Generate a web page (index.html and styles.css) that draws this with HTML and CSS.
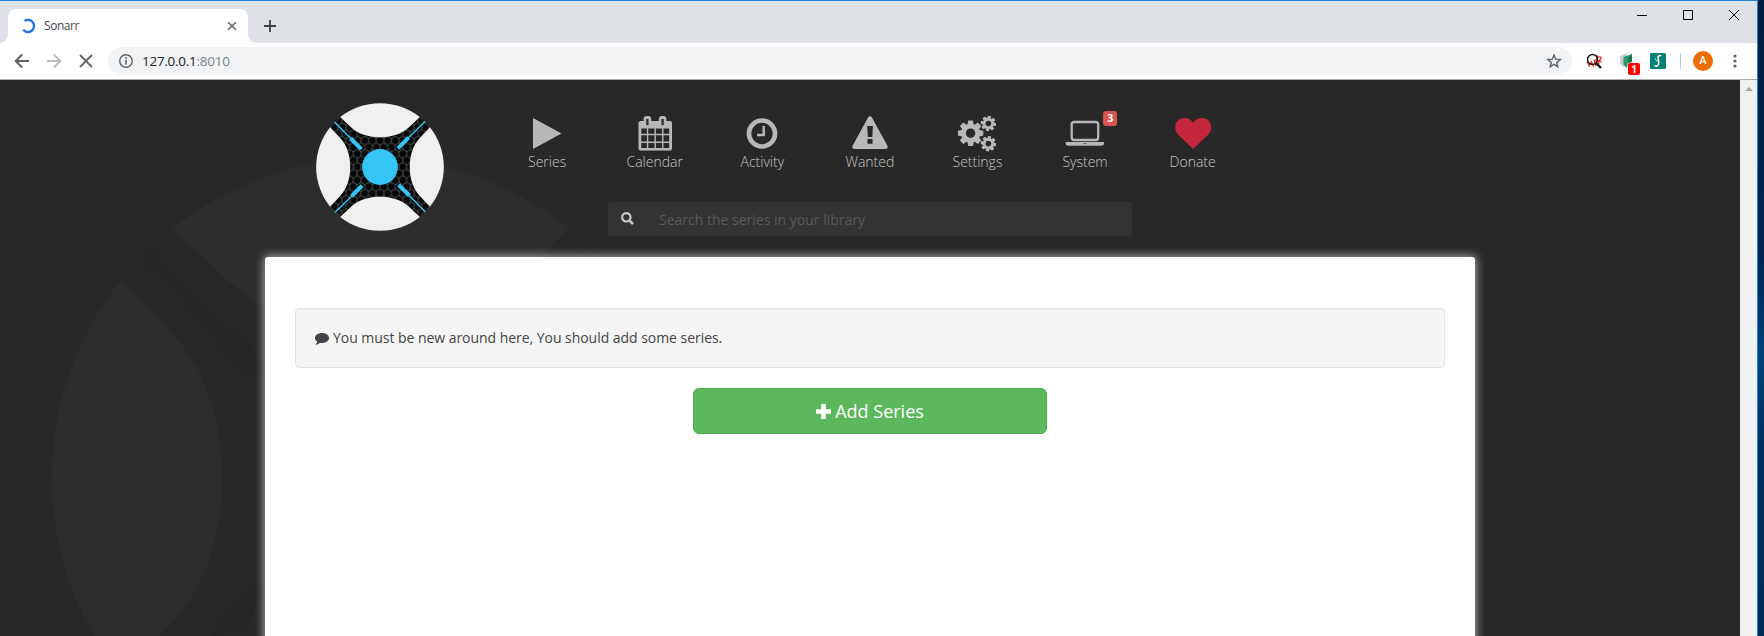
FILE: index.html
```
<!DOCTYPE html>
<html lang="en">
<head>
<meta charset="utf-8">
<title>Sonarr</title>
<link rel="stylesheet" href="styles.css">
</head>
<body>
<svg width="0" height="0" class="defs">
  <defs>
    <pattern id="hex" width="7.6" height="13.2" patternUnits="userSpaceOnUse">
      <path d="M3.8 0v2.2l3.8 2.2v4.4l-3.8 2.2v2.2M3.8 2.2L0 4.4v4.4l3.8 2.2" fill="none" stroke="#5c5e60" stroke-width=".8"/>
    </pattern>
    <g id="petals">
      <path id="petal" d="M-39.8-49.9L-29-39.8C-21-32.300-10-29.800 0-29.800S21-32.300 29-39.800L39.800-49.900A63.800 63.800 0 0 0-39.800-49.900z"/>
      <use href="#petal" transform="rotate(90)"/>
      <use href="#petal" transform="rotate(180)"/>
      <use href="#petal" transform="rotate(270)"/>
    </g>
    <g id="spoke">
      <path d="M-18.6-17.9L-29.4-28.5" stroke-width="4"/>
      <path d="M-29-28.2L-45.4-45" stroke-width="1.4"/>
    </g>
    <g id="spokes">
      <use href="#spoke"/>
      <use href="#spoke" transform="rotate(90)"/>
      <use href="#spoke" transform="rotate(180)"/>
      <use href="#spoke" transform="rotate(270)"/>
    </g>
    <g id="gear">
      <circle r="7.1" fill="none" stroke="currentColor" stroke-width="4.7"/>
      <g id="teeth">
        <path id="tooth" d="M-3.2-8.5L-2.4-12.7H2.4L3.2-8.5zM-3.2 8.5L-2.4 12.7H2.4L3.2 8.5z"/>
        <use href="#tooth" transform="rotate(45)"/>
        <use href="#tooth" transform="rotate(90)"/>
        <use href="#tooth" transform="rotate(135)"/>
      </g>
    </g>
  </defs>
</svg>
<div class="screen">
  <div class="window">
    <header class="tabstrip">
      <div class="tab">
        <svg class="spinner" width="16" height="16" viewBox="0 0 16 16"><path d="M4.500 2.900A6.100 6.100 0 1 1 3.200 11.800" fill="none" stroke="#1a73e8" stroke-width="2.300"/></svg>
        <span class="tab-title">Sonarr</span>
        <svg width="10" height="10" viewBox="0 0 10 10"><path d="M1.200 1.200l7.600 7.600M8.800 1.200L1.200 8.800" stroke="#5f6368" stroke-width="1.600"/></svg>
      </div>
      <svg class="newtab" width="12" height="12" viewBox="0 0 12 12"><path d="M6 0v12M0 6h12" stroke="#3c4043" stroke-width="1.800"/></svg>
      <div class="controls">
        <svg width="10" height="11" viewBox="0 0 10 11"><path d="M0 6.500h10" stroke="#000"/></svg>
        <svg width="10" height="11" viewBox="0 0 10 11"><path d="M.5 1.500h9v9h-9z" fill="none" stroke="#000"/></svg>
        <svg width="10" height="11" viewBox="0 0 10 11"><path d="M0 1l10 10M10 1L0 11" stroke="#000"/></svg>
      </div>
    </header>
    <div class="toolbar">
      <svg class="tool" width="16" height="16" viewBox="0 0 16 16"><path d="M15 8H2M8.200 1.500L1.700 8l6.500 6.500" fill="none" stroke="#5f6368" stroke-width="2"/></svg>
      <svg class="tool" width="16" height="16" viewBox="0 0 16 16"><path d="M1 8h13M7.800 1.500L14.300 8l-6.500 6.500" fill="none" stroke="#babcbe" stroke-width="2"/></svg>
      <svg class="tool" width="16" height="16" viewBox="0 0 16 16"><path d="M2 2l12 12M14 2L2 14" stroke="#5f6368" stroke-width="1.800"/></svg>
      <div class="omnibox">
        <svg width="16" height="16" viewBox="0 0 16 16"><circle cx="8" cy="8" r="6.300" fill="none" stroke="#5f6368" stroke-width="1.400"/><path d="M8 7v4.600M8 4.200v1.700" stroke="#5f6368" stroke-width="1.600"/></svg>
        <span class="url">127.0.0.1<span class="port">:8010</span></span>
        <svg class="star" width="16" height="16" viewBox="0 0 16 16"><path d="M8 2l1.700 4.200 4.500.3-3.500 2.900 1.100 4.400L8 11.400l-3.800 2.400 1.100-4.400-3.500-2.900 4.500-.3z" fill="none" stroke="#5f6368" stroke-width="1.400"/></svg>
      </div>
      <svg class="ext1" width="17" height="17" viewBox="0 0 17 17"><path d="M1 9l3 5M3 12l3-3M5 8l3 6M8 7l2 6M8 8c3-3 4 0 1 2M11 5l2 6M11 5c5-3 5 1 1.500 3l3.500 1M10 2l2 2" fill="none" stroke="#e8302e" stroke-width="1.300"/><circle cx="6.500" cy="6.500" r="5" fill="none" stroke="#111" stroke-width="1.400"/><path d="M10 10l5 5" stroke="#111" stroke-width="2.400"/></svg>
      <div class="ext2">
        <svg width="14" height="18" viewBox="0 0 14 18"><path d="M0 4l7-3v3L4 6v9l-4-3z" fill="#c9cdcf"/><path d="M3.500 5L12 2v8l-4 1-1 5-3.500-3z" fill="#2f9968"/><path d="M8 6l4-4v8l-4 1z" fill="#18744d"/></svg>
        <span class="ext-badge">1</span>
      </div>
      <svg class="ext3" width="16" height="16" viewBox="0 0 16 16"><rect width="16" height="16" rx="1.500" fill="#078279"/><path d="M11.300 2.800c-2-1-3.700.2-3.300 2.400.4 2.300 1.500 4.300.2 6.600-.8 1.300-2.400 1.500-3.700.8" fill="none" stroke="#fff" stroke-width="1.500"/><path d="M5.500 5.500c-.5 1.500 1 2.300 2.500 2.700" fill="none" stroke="#cfe8e6" stroke-width="1"/></svg>
      <span class="sep"></span>
      <span class="avatar">A</span>
      <svg width="4" height="14" viewBox="0 0 4 14"><g fill="#5f6368"><circle cx="2" cy="2" r="1.600"/><circle cx="2" cy="7" r="1.600"/><circle cx="2" cy="12" r="1.600"/></g></svg>
    </div>
    <div class="viewport">
      <main class="page">
        <svg class="watermark" width="650" height="650" viewBox="-65 -65 130 130"><circle r="62" fill="#282828"/><use href="#petals" fill="#2d2d2d"/><use href="#spokes" stroke="#262626"/></svg>
        <div class="top">
          <svg class="logo" width="130" height="130" viewBox="-65 -65 130 130"><circle r="62.500" fill="#060809"/><circle r="62" fill="url(#hex)"/><use href="#petals" fill="#f0f0f0"/><circle r="17.900" fill="#35c5f4"/><use href="#spokes" stroke="#35c5f4"/></svg>
          <div class="menu">
            <nav class="nav">
              <a class="item"><svg width="44" height="39" viewBox="0 0 44 39"><path d="M8 5l28.500 15.500L8 36z"/></svg><span>Series</span></a>
              <a class="item"><svg width="44" height="39" viewBox="0 0 44 39"><path fill-rule="evenodd" d="M7.500 8H37a2 2 0 0 1 2 2v25.500a2 2 0 0 1-2 2H7.500a2 2 0 0 1-2-2V10a2 2 0 0 1 2-2zM8.300 15.500v5.300h5.600v-5.300zm7 0v5.300h6.200v-5.300zm7.600 0v5.300h6.200v-5.300zm7.600 0v5.300h5.700v-5.300zM8.300 22.200v6.300h5.600v-6.300zm7 0v6.300h6.200v-6.300zm7.600 0v6.300h6.200v-6.300zm7.600 0v6.300h5.700v-6.300zM8.300 29.900V35h5.600v-5.100zm7 0V35h6.200v-5.100zm7.600 0V35h6.200v-5.100zm7.600 0V35h5.700v-5.100z"/><rect x="11.600" y="4.100" width="5.600" height="8" rx="2" stroke="#b8b8b8" stroke-width="2"/><rect x="26.800" y="4.100" width="5.600" height="8" rx="2" stroke="#b8b8b8" stroke-width="2"/><path d="M14.400 6v6.200M29.600 6v6.200" stroke="#282828" stroke-width="2.200"/></svg><span>Calendar</span></a>
              <a class="item"><svg width="44" height="39" viewBox="0 0 44 39"><circle cx="22" cy="20.500" r="13" fill="none" stroke="#b8b8b8" stroke-width="4.700"/><path d="M23.700 13V22H17" fill="none" stroke="#b8b8b8" stroke-width="2.400"/></svg><span>Activity</span></a>
              <a class="item"><svg width="44" height="39" viewBox="0 0 44 39"><path fill-rule="evenodd" d="M20.200 4.200a2.200 2.200 0 0 1 3.600 0L39.400 32.800a2.200 2.200 0 0 1-1.900 3.300h-31a2.200 2.200 0 0 1-1.900-3.300zM19.200 13l.6 11h4.500l.6-11zm.3 13v4.800h5V26z"/></svg><span>Wanted</span></a>
              <a class="item"><svg width="44" height="39" viewBox="0 0 44 39"><use href="#gear" transform="translate(15.600 20.200)"/><use href="#gear" transform="translate(33.400 10.500) rotate(8) scale(.6)"/><use href="#gear" transform="translate(33.400 30.700) rotate(8) scale(.6)"/></svg><span>Settings</span></a>
              <a class="item"><svg width="44" height="39" viewBox="0 0 44 39"><rect x="8.700" y="9" width="26.500" height="18" rx="2.500" fill="none" stroke="#b8b8b8" stroke-width="2.300"/><path d="M2.700 29H41v1.800c0 1.200-1.500 2-3.200 2H6c-1.800 0-3.300-.8-3.300-2z"/><path d="M20 30.500h4" stroke="#777" stroke-width="1"/></svg><span>System</span><b class="count">3</b></a>
              <a class="item"><svg class="heart" width="44" height="39" viewBox="0 0 44 39"><path d="M22.200 36L7.500 22C5.500 20 4.300 17.500 4.300 14.500 4.300 8.800 8 5 13.500 5c3.500 0 6.700 2 8.700 4.800C24.200 7 27.400 5 31 5c5.500 0 9.100 3.800 9.100 9.500 0 3-1.200 5.500-3.200 7.500z"/></svg><span>Donate</span></a>
            </nav>
            <div class="search">
              <svg width="13" height="13" viewBox="0 0 13 13"><circle cx="5.300" cy="5.300" r="4.200" fill="none" stroke="#ccc" stroke-width="2.200"/><path d="M8.300 8.300l3.700 3.700" stroke="#ccc" stroke-width="2.500"/></svg>
              <span>Search the series in your library</span>
            </div>
          </div>
        </div>
        <section class="panel">
          <div class="well">
            <svg width="14" height="12" viewBox="0 0 14 12"><path d="M7 0c3.900 0 7 2.200 7 5s-3.100 5-7 5c-.7 0-1.300-.1-1.900-.2C3.900 10.900 2.400 11.600.9 11.800c-.3 0-.4-.3-.2-.5.7-.7 1.200-1.300 1.400-2.700C.8 7.700 0 6.400 0 5c0-2.800 3.100-5 7-5z" fill="#444"/></svg>
            <span>You must be new around here, You should add some series.</span>
          </div>
          <button class="add"><svg width="15" height="15" viewBox="0 0 15 15"><path d="M7.500 0v15M0 7.500h15" stroke="#fff" stroke-width="4.600"/></svg><span>Add Series</span></button>
        </section>
      </main>
      <aside class="scrollbar"><svg width="8" height="4" viewBox="0 0 8 4"><path d="M0 4l4-4 4 4z" fill="#a3a3a3"/></svg></aside>
    </div>
  </div>
  <div class="desktop"></div>
</div>
</body>
</html>
```
FILE: styles.css
```
* { box-sizing: border-box; }
body { margin: 0; font-family: "Open Sans", sans-serif; }
.defs { position: absolute; }
svg { display: block; flex: none; }
.screen { display: flex; width: 1764px; height: 636px; overflow: hidden; }
.window { display: flex; flex-direction: column; width: 1758px; border-top: 1px solid #1883d7; border-right: 1px solid #1883d7; }
.desktop { width: 6px; background: linear-gradient(#001d3f, #002550 40%, #00427a 56%, #00305e 70%, #002a54); }

.tabstrip { display: flex; height: 42px; padding: 8px 0 0 8px; background: #dee1e6; }
.tab { position: relative; display: flex; align-items: center; width: 240px; height: 34px; padding: 0 11px 0 12px; background: #fff; border-radius: 8px 8px 0 0; }
.tab::before, .tab::after { content: ""; position: absolute; bottom: 0; width: 8px; height: 8px; }
.tab::before { left: -8px; background: radial-gradient(circle at 0 0, transparent 7.5px, #fff 8px); }
.tab::after { right: -8px; background: radial-gradient(circle at 100% 0, transparent 7.5px, #fff 8px); }
.tab-title { flex: 1; margin-left: 8px; font: 12px/16px "Open Sans", sans-serif; letter-spacing: -.45px; color: #45494d; }
.newtab { margin: 11px 0 0 16px; }
.controls { display: flex; gap: 36px; margin-left: auto; padding-right: 18px; }
.toolbar { display: flex; align-items: center; height: 37px; padding-right: 20px; background: #fff; border-bottom: 1px solid #adadad; }
.tool { margin-left: 14px; }
.tool + .tool { margin-left: 16px; }
.omnibox { display: flex; align-items: center; width: 1464px; height: 28px; margin-left: 14px; padding: 0 10px; border-radius: 14px; background: #f1f3f4; }
.url { flex: 1; margin-left: 8px; font: 13.5px/20px "Open Sans", sans-serif; letter-spacing: -.27px; color: #202124; }
.port { color: #80868b; }
.ext1 { margin-left: 14px; }
.ext2 { position: relative; margin-left: 17px; }
.ext-badge { position: absolute; left: 8px; top: 11px; width: 12px; height: 12px; border-radius: 2px; background: #f00; color: #fff; font: bold 10px/12px "Open Sans", sans-serif; text-align: center; }
.ext3 { margin-left: 16px; }
.sep { width: 1px; height: 16px; margin-left: 14px; background: #c4c7ca; }
.avatar { width: 20px; height: 20px; margin: 0 auto 0 12px; border-radius: 50%; background: #ef6c00; color: #fff; font: 500 11px/20px Roboto, sans-serif; text-align: center; }

.viewport { display: flex; flex: 1; min-height: 0; }
.page { position: relative; flex: 1; overflow: hidden; background: #282828; }
.scrollbar { width: 17px; padding: 7px 0 0 5px; background: #f1f1f1; }
.watermark { position: absolute; left: 46px; top: 73px; }
.top { position: relative; display: flex; height: 177px; padding-left: 315px; }
.logo { margin-top: 22px; }
.menu { padding: 33px 0 0 48px; }
.nav { display: flex; padding-left: .3px; }
.item { position: relative; display: flex; flex-direction: column; align-items: center; width: 107.600px; color: #b8b8b8; fill: currentColor; font-size: 14px; line-height: 20px; font-weight: 300; }
.item span { color: #c6c6c6; }
.heart { color: #c4273c; }
.count { position: absolute; left: 72px; top: -2px; width: 14px; height: 15px; border-radius: 3px; background: #d9534f; color: #fff; font: bold 10.500px/15px "Open Sans", sans-serif; text-align: center; }
.search { display: flex; align-items: center; width: 524px; height: 34px; margin: 30px 0 0 115px; padding-left: 13px; border-radius: 3px; background: #333; color: #5a5a5a; font-size: 14px; }
.search svg { margin-bottom: 1px; }
.search span { margin-left: 25px; }
.panel { position: relative; width: 1210px; height: 500px; margin-left: 265px; padding: 51px 30px 0; border-radius: 3px 3px 0 0; background: #fff; box-shadow: 0 0 10px 1px #adadad; }
.well { display: flex; align-items: center; height: 60px; padding-left: 19px; border: 1px solid #e3e3e3; border-radius: 4px; background: #f5f5f5; box-shadow: inset 0 1px 1px rgba(0,0,0,.05); color: #444; font-size: 14px; }
.well svg { margin-top: 1px; }
.well span { margin: 0 0 2px 4px; letter-spacing: -.04px; }
.add { display: flex; align-items: center; justify-content: center; width: 354px; height: 46px; margin: 20px auto 0; border: 1px solid #4cae4c; border-radius: 6px; background: #5cb85c; color: #fff; font: 18px/24px "Open Sans", sans-serif; }
.add span { margin-left: 4px; }
```
